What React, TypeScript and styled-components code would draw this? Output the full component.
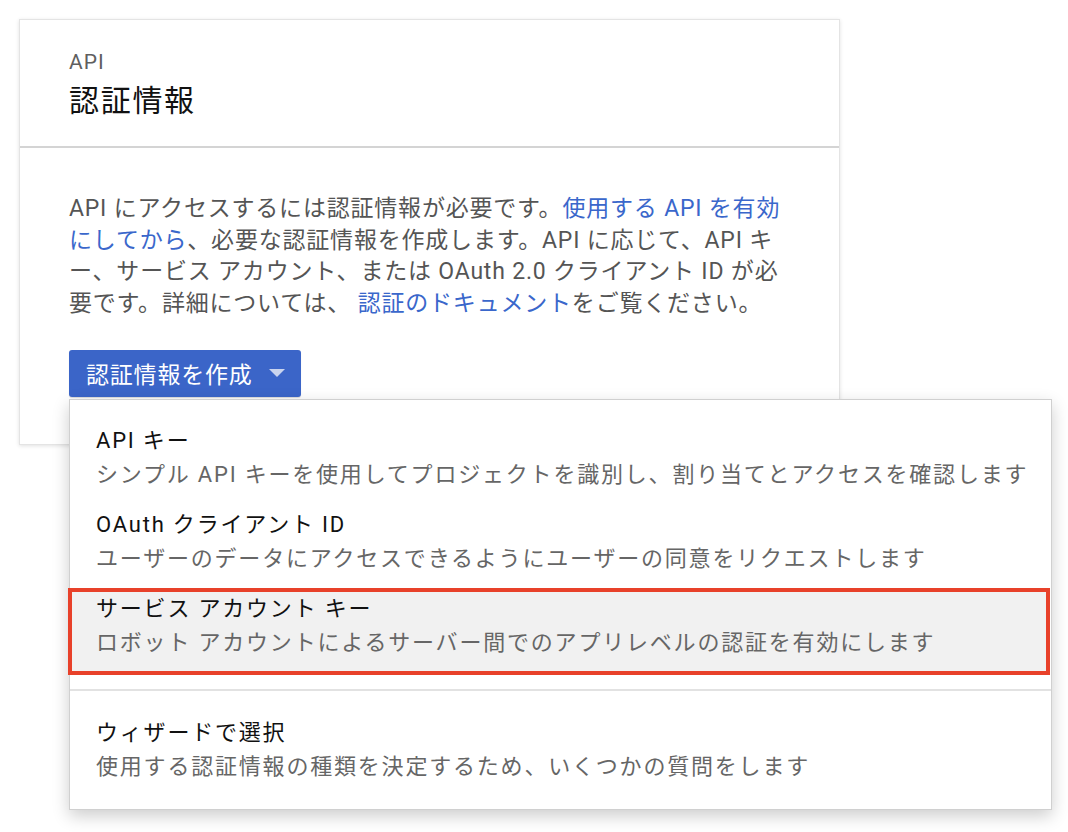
import * as React from 'react';
import styled, { createGlobalStyle } from 'styled-components';

const GlobalStyle = createGlobalStyle`
  html, body {
    margin: 0;
    padding: 0;
    background: #ffffff;
  }
  body {
    font-family: Roboto, "Noto Sans CJK JP", "Noto Sans", sans-serif;
    -webkit-font-smoothing: antialiased;
  }
`;

const Page = styled.div`
  padding: 19px;
  width: 1068px;
  height: 832px;
  box-sizing: border-box;
`;

const Card = styled.div`
  width: 821px;
  height: 426px;
  box-sizing: border-box;
  border: 1px solid #e4e4e4;
  box-shadow: 0 1px 4px rgba(0, 0, 0, 0.12);
  background: #fff;
`;

const CardHeader = styled.div`
  padding: 29px 49px 0;
  height: 128px;
  box-sizing: border-box;
  border-bottom: 2px solid #d4d4d4;
`;

const Eyebrow = styled.div`
  font-size: 21px;
  letter-spacing: 1px;
  line-height: 26px;
  color: #5f5f5f;
`;

const Title = styled.h1`
  margin: 1px 0 0;
  font-size: 30px;
  letter-spacing: 1.7px;
  font-weight: 400;
  line-height: 49px;
  color: #111;
`;

const CardBody = styled.div`
  padding: 45px 49px 0;
`;

const Paragraph = styled.p`
  margin: 0;
  font-size: 23px;
  letter-spacing: 0.8px;
  line-height: 31.7px;
  color: #555;
  white-space: nowrap;
`;

const Link = styled.a`
  color: #3a67cb;
  text-decoration: none;
`;

const MenuAnchor = styled.div`
  position: relative;
  margin-top: 30px;
`;

const CreateButton = styled.button`
  display: flex;
  align-items: center;
  gap: 16px;
  height: 47px;
  padding: 0 16px 0 17px;
  border: none;
  border-radius: 3px;
  background: #3b65c8;
  color: #fff;
  font-family: inherit;
  font-size: 23px;
  letter-spacing: 0.8px;
  box-shadow: 0 1px 1px rgba(0, 0, 0, 0.15);
`;

const Caret = styled.span`
  width: 0;
  height: 0;
  border-left: 8px solid transparent;
  border-right: 8px solid transparent;
  border-top: 8px solid #c9d4ee;
`;

const Menu = styled.div`
  position: absolute;
  left: 0;
  top: 49px;
  width: 983px;
  box-sizing: border-box;
  background: #fff;
  border: 1px solid #d0d0d0;
  box-shadow: 0 6px 16px rgba(0, 0, 0, 0.2);
  z-index: 2;
`;

const MenuGroup = styled.div<{ $top: number; $bottom: number }>`
  padding: ${(p) => p.$top}px 0 ${(p) => p.$bottom}px;
  & + & {
    border-top: 2px solid #e2e2e2;
  }
`;

const MenuItem = styled.div<{ $selected?: boolean }>`
  position: relative;
  isolation: isolate;
  padding: 8px 0 8px 26px;
  white-space: nowrap;
  &::after {
    content: '';
    display: ${(p) => (p.$selected ? 'block' : 'none')};
    position: absolute;
    top: 4px;
    bottom: -7px;
    left: -2px;
    right: 1px;
    background: #f1f1f1;
    border: 4px solid #e8412a;
    z-index: -1;
  }
`;

const ItemTitle = styled.div`
  font-size: 22px;
  letter-spacing: 1.8px;
  line-height: 34px;
  color: #111;
`;

const ItemDesc = styled.div`
  font-size: 22px;
  letter-spacing: 1.8px;
  line-height: 34px;
  color: #666;
`;

const items = [
  {
    title: 'API キー',
    desc: 'シンプル API キーを使用してプロジェクトを識別し、割り当てとアクセスを確認します',
  },
  {
    title: 'OAuth クライアント ID',
    desc: 'ユーザーのデータにアクセスできるようにユーザーの同意をリクエストします',
  },
  {
    title: 'サービス アカウント キー',
    desc: 'ロボット アカウントによるサーバー間でのアプリレベルの認証を有効にします',
    selected: true,
  },
];

export default function App() {
  return (
    <Page>
      <GlobalStyle />
      <Card>
        <CardHeader>
          <Eyebrow>API</Eyebrow>
          <Title>認証情報</Title>
        </CardHeader>
        <CardBody>
          <Paragraph>
            API にアクセスするには認証情報が必要です。<Link href="#">使用する API を有効</Link>
            <br />
            <Link href="#">にしてから</Link>、必要な認証情報を作成します。API に応じて、API キ
            <br />
            ー、サービス アカウント、または OAuth 2.0 クライアント ID が必
            <br />
            要です。詳細については、 <Link href="#">認証のドキュメント</Link>をご覧ください。
          </Paragraph>
          <MenuAnchor>
            <CreateButton>
              認証情報を作成
              <Caret />
            </CreateButton>
            <Menu>
              <MenuGroup $top={16} $bottom={21}>
                {items.map((it) => (
                  <MenuItem key={it.title} $selected={it.selected}>
                    <ItemTitle>{it.title}</ItemTitle>
                    <ItemDesc>{it.desc}</ItemDesc>
                  </MenuItem>
                ))}
              </MenuGroup>
              <MenuGroup $top={17} $bottom={17}>
                <MenuItem>
                  <ItemTitle>ウィザードで選択</ItemTitle>
                  <ItemDesc>使用する認証情報の種類を決定するため、いくつかの質問をします</ItemDesc>
                </MenuItem>
              </MenuGroup>
            </Menu>
          </MenuAnchor>
        </CardBody>
      </Card>
    </Page>
  );
}
